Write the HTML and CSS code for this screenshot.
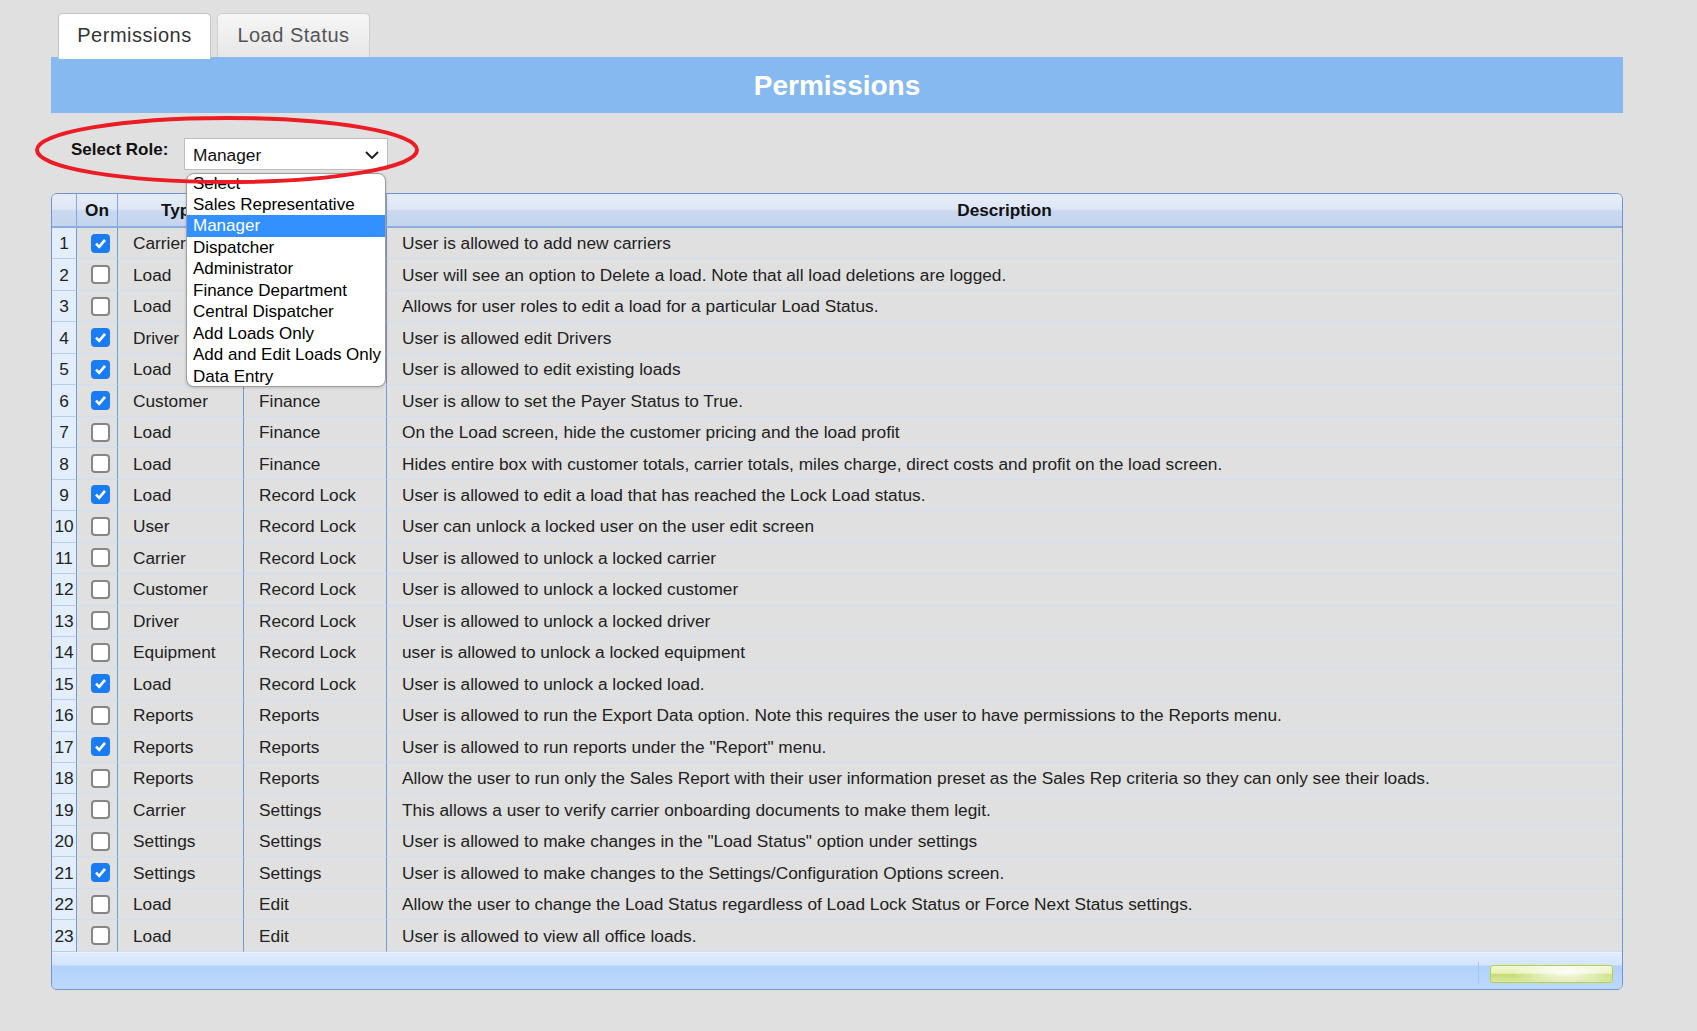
FILE: index.html
```html
<!DOCTYPE html>
<html>
<head>
<meta charset="utf-8">
<title>Permissions</title>
<link rel="stylesheet" href="styles.css">
</head>
<body>
<div class="page">
  <div class="tabs">
    <div class="tab active">Permissions</div>
    <div class="tab">Load Status</div>
  </div>
  <div class="banner">Permissions</div>

  <div class="role-row">
    <div class="role-label">Select Role:</div>
    <div class="select-wrap">
      <div class="select">
        <span>Manager</span>
        <svg class="chev" width="14" height="8" viewBox="0 0 14 8"><path d="M1 1 L7 7 L13 1" fill="none" stroke="#222" stroke-width="2"/></svg>
      </div>
      <div class="dropdown">
        <div class="dd-list">
          <div class="dd-item">Select</div>
          <div class="dd-item">Sales Representative</div>
          <div class="dd-item sel">Manager</div>
          <div class="dd-item">Dispatcher</div>
          <div class="dd-item">Administrator</div>
          <div class="dd-item">Finance Department</div>
          <div class="dd-item">Central Dispatcher</div>
          <div class="dd-item">Add Loads Only</div>
          <div class="dd-item">Add and Edit Loads Only</div>
          <div class="dd-item">Data Entry</div>
        </div>
      </div>
    </div>
    <svg class="ring" width="400" height="80" viewBox="0 0 400 80"><ellipse cx="197" cy="38" rx="190" ry="32" fill="none" stroke="#ec1c24" stroke-width="4"/></svg>
  </div>

  <div class="grid">
    <div class="row head">
      <div class="c n"></div>
      <div class="c h">On</div>
      <div class="c h">Type</div>
      <div class="c h"></div>
      <div class="c h">Description</div>
    </div>
    <div class="row"><div class="c n">1</div><div class="c k"><span class="cb on"><svg viewBox="0 0 15 15"><path d="M3 7.6 L6.2 10.8 L12 3.8"/></svg></span></div><div class="c">Carrier</div><div class="c"></div><div class="c">User is allowed to add new carriers</div></div>
    <div class="row"><div class="c n">2</div><div class="c k"><span class="cb"></span></div><div class="c">Load</div><div class="c"></div><div class="c">User will see an option to Delete a load. Note that all load deletions are logged.</div></div>
    <div class="row"><div class="c n">3</div><div class="c k"><span class="cb"></span></div><div class="c">Load</div><div class="c"></div><div class="c">Allows for user roles to edit a load for a particular Load Status.</div></div>
    <div class="row"><div class="c n">4</div><div class="c k"><span class="cb on"><svg viewBox="0 0 15 15"><path d="M3 7.6 L6.2 10.8 L12 3.8"/></svg></span></div><div class="c">Driver</div><div class="c"></div><div class="c">User is allowed edit Drivers</div></div>
    <div class="row"><div class="c n">5</div><div class="c k"><span class="cb on"><svg viewBox="0 0 15 15"><path d="M3 7.6 L6.2 10.8 L12 3.8"/></svg></span></div><div class="c">Load</div><div class="c"></div><div class="c">User is allowed to edit existing loads</div></div>
    <div class="row"><div class="c n">6</div><div class="c k"><span class="cb on"><svg viewBox="0 0 15 15"><path d="M3 7.6 L6.2 10.8 L12 3.8"/></svg></span></div><div class="c">Customer</div><div class="c">Finance</div><div class="c">User is allow to set the Payer Status to True.</div></div>
    <div class="row"><div class="c n">7</div><div class="c k"><span class="cb"></span></div><div class="c">Load</div><div class="c">Finance</div><div class="c">On the Load screen, hide the customer pricing and the load profit</div></div>
    <div class="row"><div class="c n">8</div><div class="c k"><span class="cb"></span></div><div class="c">Load</div><div class="c">Finance</div><div class="c">Hides entire box with customer totals, carrier totals, miles charge, direct costs and profit on the load screen.</div></div>
    <div class="row"><div class="c n">9</div><div class="c k"><span class="cb on"><svg viewBox="0 0 15 15"><path d="M3 7.6 L6.2 10.8 L12 3.8"/></svg></span></div><div class="c">Load</div><div class="c">Record Lock</div><div class="c">User is allowed to edit a load that has reached the Lock Load status.</div></div>
    <div class="row"><div class="c n">10</div><div class="c k"><span class="cb"></span></div><div class="c">User</div><div class="c">Record Lock</div><div class="c">User can unlock a locked user on the user edit screen</div></div>
    <div class="row"><div class="c n">11</div><div class="c k"><span class="cb"></span></div><div class="c">Carrier</div><div class="c">Record Lock</div><div class="c">User is allowed to unlock a locked carrier</div></div>
    <div class="row"><div class="c n">12</div><div class="c k"><span class="cb"></span></div><div class="c">Customer</div><div class="c">Record Lock</div><div class="c">User is allowed to unlock a locked customer</div></div>
    <div class="row"><div class="c n">13</div><div class="c k"><span class="cb"></span></div><div class="c">Driver</div><div class="c">Record Lock</div><div class="c">User is allowed to unlock a locked driver</div></div>
    <div class="row"><div class="c n">14</div><div class="c k"><span class="cb"></span></div><div class="c">Equipment</div><div class="c">Record Lock</div><div class="c">user is allowed to unlock a locked equipment</div></div>
    <div class="row"><div class="c n">15</div><div class="c k"><span class="cb on"><svg viewBox="0 0 15 15"><path d="M3 7.6 L6.2 10.8 L12 3.8"/></svg></span></div><div class="c">Load</div><div class="c">Record Lock</div><div class="c">User is allowed to unlock a locked load.</div></div>
    <div class="row"><div class="c n">16</div><div class="c k"><span class="cb"></span></div><div class="c">Reports</div><div class="c">Reports</div><div class="c">User is allowed to run the Export Data option. Note this requires the user to have permissions to the Reports menu.</div></div>
    <div class="row"><div class="c n">17</div><div class="c k"><span class="cb on"><svg viewBox="0 0 15 15"><path d="M3 7.6 L6.2 10.8 L12 3.8"/></svg></span></div><div class="c">Reports</div><div class="c">Reports</div><div class="c">User is allowed to run reports under the "Report" menu.</div></div>
    <div class="row"><div class="c n">18</div><div class="c k"><span class="cb"></span></div><div class="c">Reports</div><div class="c">Reports</div><div class="c">Allow the user to run only the Sales Report with their user information preset as the Sales Rep criteria so they can only see their loads.</div></div>
    <div class="row"><div class="c n">19</div><div class="c k"><span class="cb"></span></div><div class="c">Carrier</div><div class="c">Settings</div><div class="c">This allows a user to verify carrier onboarding documents to make them legit.</div></div>
    <div class="row"><div class="c n">20</div><div class="c k"><span class="cb"></span></div><div class="c">Settings</div><div class="c">Settings</div><div class="c">User is allowed to make changes in the "Load Status" option under settings</div></div>
    <div class="row"><div class="c n">21</div><div class="c k"><span class="cb on"><svg viewBox="0 0 15 15"><path d="M3 7.6 L6.2 10.8 L12 3.8"/></svg></span></div><div class="c">Settings</div><div class="c">Settings</div><div class="c">User is allowed to make changes to the Settings/Configuration Options screen.</div></div>
    <div class="row"><div class="c n">22</div><div class="c k"><span class="cb"></span></div><div class="c">Load</div><div class="c">Edit</div><div class="c">Allow the user to change the Load Status regardless of Load Lock Status or Force Next Status settings.</div></div>
    <div class="row"><div class="c n">23</div><div class="c k"><span class="cb"></span></div><div class="c">Load</div><div class="c">Edit</div><div class="c">User is allowed to view all office loads.</div></div>
    <div class="foot">
      <div class="sep"></div>
      <div class="bar"></div>
    </div>
  </div>
</div>
</body>
</html>
```

FILE: styles.css
```css
* { box-sizing: border-box; }
html, body { margin: 0; padding: 0; }
body {
  background: #e0e0e0;
  font-family: "Liberation Sans", Arial, sans-serif;
  color: #222;
}
.page {
  margin-left: 51px;
  width: 1572px;
  padding-top: 13px;
}
.tabs {
  display: flex;
  align-items: flex-start;
  height: 44px;
  padding-left: 7px;
  gap: 6px;
}
.tab {
  width: 153px;
  height: 44px;
  border: 1px solid #cfcfcf;
  border-bottom: none;
  border-radius: 5px 5px 0 0;
  background: linear-gradient(#f6f6f6, #e7e7e7);
  color: #555;
  font-size: 20px;
  letter-spacing: 0.5px;
  display: flex;
  align-items: center;
  justify-content: center;
}
.tab.active {
  height: 46px;
  background: #fff;
  color: #333;
  border-color: #c4c4c4;
  position: relative;
  z-index: 1;
  padding-bottom: 2px;
}
.banner {
  height: 56px;
  line-height: 57px;
  background: #86b9f0;
  color: #fff;
  font-weight: bold;
  font-size: 28px;
  text-align: center;
}
.role-row {
  position: relative;
  display: flex;
  align-items: flex-start;
  margin-top: 25px;
  height: 32px;
  padding-left: 20px;
}
.role-label {
  width: 113px;
  font-weight: bold;
  font-size: 17px;
  line-height: 20px;
  padding-top: 2px;
  color: #111;
}
.select-wrap {
  position: relative;
  width: 204px;
  height: 32px;
}
.select {
  height: 32px;
  background: #fff;
  border: 1px solid #bdbdbd;
  font-size: 17.3px;
  color: #111;
  padding: 2px 8px 0 8px;
  display: flex;
  align-items: center;
  justify-content: space-between;
}
.chev { display: block; margin-top: -1px; }
.dropdown {
  position: absolute;
  left: 2px;
  top: 35px;
  width: 200px;
  height: 214px;
  background: #fff;
  border: 1px solid #9d9d9d;
  border-radius: 8px;
  overflow: hidden;
  box-shadow: 0 1px 3px rgba(0, 0, 0, 0.18);
  z-index: 5;
}
.dd-list { margin-top: -1.5px; }
.dd-item {
  height: 21.46px;
  line-height: 21.46px;
  font-size: 17px;
  padding-left: 6px;
  color: #000;
  white-space: nowrap;
}
.dd-item.sel {
  background: #3390ff;
  color: #fff;
}
.ring {
  position: absolute;
  left: -21px;
  top: -26px;
  z-index: 6;
  overflow: visible;
}
.grid {
  margin-top: 23px;
  border: 1px solid #6f96d0;
  border-radius: 6px;
  overflow: hidden;
}
.row {
  display: grid;
  grid-template-columns: 25px 41px 126px 143px 1fr;
  height: 31.48px;
}
.c {
  display: flex;
  align-items: center;
  padding-left: 15px;
  padding-top: 1px;
  font-size: 17.3px;
  white-space: nowrap;
  overflow: hidden;
  border-right: 1px solid #7199d3;
  border-bottom: 1px solid #cfdef1;
}
.c:last-child { border-right: none; }
.c.n {
  padding: 1px 0 0 0;
  justify-content: center;
  background: #e3eefc;
  border-bottom-color: #b9cde9;
  color: #222;
}
.c.k {
  padding: 0 0 0 7px;
  justify-content: center;
}
.row.head {
  height: 34px;
  background: linear-gradient(#e6edf9 0%, #dee7f5 46%, #c9d8ef 54%, #c4d5ee 100%);
  border-bottom: 2px solid #8dadde;
}
.row.head .c {
  border-bottom: none;
  border-right-color: #84a6da;
}
.row.head .c.n { background: transparent; }
.c.h {
  padding: 1px 0 0 0;
  justify-content: center;
  font-weight: bold;
  font-size: 17.2px;
  color: #111;
}
.cb {
  display: block;
  width: 19px;
  height: 19px;
  border: 2px solid #868686;
  border-radius: 4px;
  background: #fff;
}
.cb.on {
  background: #1a7cf2;
  border-color: #1a7cf2;
}
.cb svg {
  display: block;
  width: 15px;
  height: 15px;
  fill: none;
  stroke: #fff;
  stroke-width: 2.6;
}
.foot {
  height: 37px;
  background: linear-gradient(#f6f9ff 0, #e0ebfd 1px, #d3e4fd 13px, #b3d2fb 14px, #bbd8fd 100%);
  display: flex;
  justify-content: flex-end;
  align-items: flex-start;
  padding: 13px 9px 0 0;
}
.sep {
  width: 1px;
  height: 22px;
  margin-top: -3px;
  margin-right: 11px;
  background: #a6c5ef;
}
.bar {
  width: 123px;
  height: 18px;
  border: 1px solid #b9d24c;
  border-radius: 3px;
  background:
    radial-gradient(ellipse 45% 80% at 62% 40%, rgba(255,255,255,0.95), rgba(255,255,255,0) 100%),
    linear-gradient(#eff8cf 0%, #e6f2b8 45%, #c8dc74 52%, #d9e9a2 100%);
}
```
